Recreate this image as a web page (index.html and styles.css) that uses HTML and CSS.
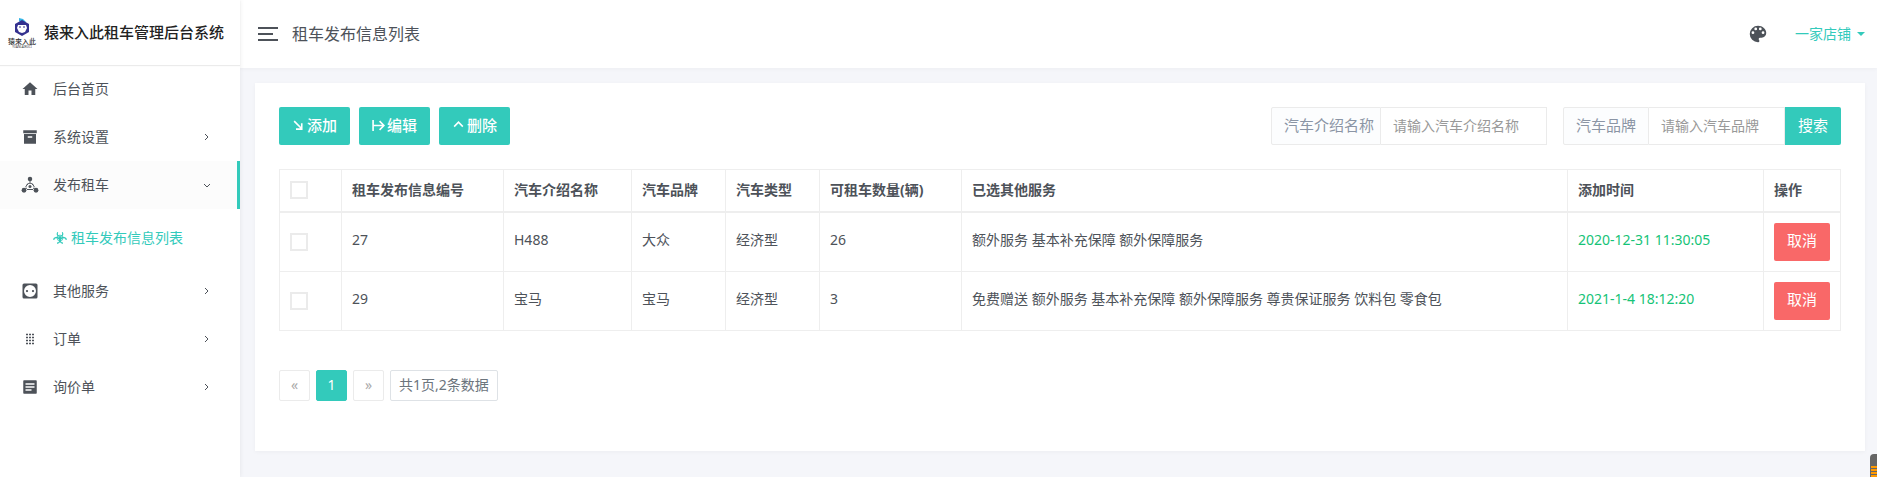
FILE: index.html
```html
<!DOCTYPE html>
<html lang="zh-CN">
<head>
<meta charset="utf-8">
<title>租车发布信息列表</title>
<link rel="stylesheet" href="styles.css">
</head>
<body>
<div class="layout">
  <aside class="sidebar">
    <a class="brand" href="#">
      <svg class="brand-mark" viewBox="0 0 32 32" aria-hidden="true">
        <path d="M13 1l4 1 3 3-4 1-3-2z" fill="#35b5e6"/>
        <path d="M16 3l7 4v8l-7 4-7-4V7z" fill="#34318f"/>
        <path d="M12 8h8l1 3-2 4-3 1-3-1-2-4z" fill="#fff"/>
        <path d="M13 10h2M17 10h2" stroke="#34318f"/>
        <text x="16" y="27" class="mark-name">猿来入此</text>
        <text x="16" y="31" class="mark-sub">YUANLAIRUCI</text>
      </svg>
      <span class="brand-name">猿来入此租车管理后台系统</span>
    </a>
    <nav>
      <ul class="menu">
        <li><a class="menu-link" href="#">
          <svg class="icon" viewBox="0 0 24 24"><path d="M10 20v-6h4v6h5v-8h3L12 3 2 12h3v8z"/></svg>
          <span>后台首页</span></a></li>
        <li><a class="menu-link" href="#">
          <svg class="icon" viewBox="0 0 24 24"><path d="M3 3h18v4H3zM4 8h16v13H4zM9 11v2h6v-2z" fill-rule="evenodd"/></svg>
          <span>系统设置</span>
          <svg class="arrow" viewBox="0 0 12 12"><path d="M4 3l3 3-3 3"/></svg></a></li>
        <li><a class="menu-link active" href="#">
          <svg class="icon" viewBox="0 0 24 24"><circle cx="12" cy="4" r="3"/><circle cx="4" cy="19" r="3.2"/><circle cx="20" cy="19" r="3.2"/><circle cx="12" cy="14" r="2"/><path d="M12 6v3M6 17l2-1M18 17l-2-1M8 12a4.500 4.500 0 018 0M8 18h8M9 10l-3 5M15 10l3 5" fill="none" stroke="currentColor" stroke-width="1.3"/></svg>
          <span>发布租车</span>
          <svg class="arrow" viewBox="0 0 12 12"><path d="M3 5l3 3 3-3"/></svg></a>
          <ul class="submenu">
            <li><a class="submenu-link" href="#">
              <svg class="icon-small" viewBox="0 0 24 24"><g fill="none" stroke="currentColor"><path d="M8 2c-2 4 0 7 4 7s6-3 4-7" stroke-width="2"/><path d="M1 15c1-4 6-5 9-2s2 7-3 8M23 15c-1-4-6-5-9-2s-2 7 3 8" stroke-width="2.400"/><circle cx="12" cy="12" r="5" stroke-width="1.300"/></g><circle cx="12" cy="12" r="2.500"/></svg>
              <span>租车发布信息列表</span></a></li>
          </ul></li>
        <li><a class="menu-link" href="#">
          <svg class="icon" viewBox="0 0 24 24"><path d="M4 2h16q2 0 2 2v16q0 2-2 2H4q-2 0-2-2V4q0-2 2-2zM12 4a8 8 0 100 16 8 8 0 000-16zM8 10.500a1.500 1.500 0 110 3 1.500 1.500 0 010-3zM16 10.500a1.500 1.500 0 110 3 1.500 1.500 0 010-3z" fill-rule="evenodd"/></svg>
          <span>其他服务</span>
          <svg class="arrow" viewBox="0 0 12 12"><path d="M4 3l3 3-3 3"/></svg></a></li>
        <li><a class="menu-link" href="#">
          <svg class="icon" viewBox="0 0 18 18"><path d="M5 4.500h8M5 7.500h8M5 10.500h8M5 13.500h8" fill="none" stroke="currentColor" stroke-width="1.300" stroke-dasharray="2 1"/></svg>
          <span>订单</span>
          <svg class="arrow" viewBox="0 0 12 12"><path d="M4 3l3 3-3 3"/></svg></a></li>
        <li><a class="menu-link" href="#">
          <svg class="icon" viewBox="0 0 24 24"><path d="M4 3h16q1 0 1 1v16q0 1-1 1H4q-1 0-1-1V4q0-1 1-1zM6 7v2h12V7zM6 11v2h12v-2zM6 15v2h8v-2z" fill-rule="evenodd"/></svg>
          <span>询价单</span>
          <svg class="arrow" viewBox="0 0 12 12"><path d="M4 3l3 3-3 3"/></svg></a></li>
      </ul>
    </nav>
  </aside>

  <div class="page">
    <header class="topbar">
      <button class="toggler" type="button" aria-label="菜单"><i></i><i class="short"></i><i></i></button>
      <h1 class="title">租车发布信息列表</h1>
      <button class="skin" type="button" aria-label="主题">
        <svg viewBox="0 0 24 24"><path d="M17.500 12a1.500 1.500 0 010-3 1.500 1.500 0 010 3m-3-4a1.500 1.500 0 010-3 1.500 1.500 0 010 3m-5 0a1.500 1.500 0 010-3 1.500 1.500 0 010 3m-3 4a1.500 1.500 0 010-3 1.500 1.500 0 010 3M12 3a9 9 0 000 18 1.500 1.500 0 001.500-1.500c0-.39-.15-.74-.39-1-.23-.27-.38-.62-.38-1a1.500 1.500 0 011.500-1.500H16a5 5 0 005-5c0-4.420-4.030-8-9-8z" fill-rule="evenodd"/></svg>
      </button>
      <button class="account" type="button"><span>一家店铺</span><i class="caret"></i></button>
    </header>

    <main class="content">
      <section class="card">
        <div class="toolbar">
          <div class="actions">
            <button class="btn" type="button"><svg viewBox="0 0 12 12"><path d="M2 2l7 7M9 4v5.300H3.700"/></svg>添加</button>
            <button class="btn" type="button"><svg viewBox="0 0 12 12"><path d="M1 1v10M1 6h10M7 2l4 4-4 4"/></svg>编辑</button>
            <button class="btn" type="button"><svg viewBox="0 0 12 12"><path d="M2 7l4-4 4 4"/></svg>删除</button>
          </div>
          <form class="search">
            <div class="field">
              <label for="intro">汽车介绍名称</label>
              <input id="intro" class="wide" type="text" placeholder="请输入汽车介绍名称">
            </div>
            <div class="field">
              <label for="make">汽车品牌</label>
              <input id="make" class="narrow" type="text" placeholder="请输入汽车品牌">
              <button class="btn submit" type="button">搜索</button>
            </div>
          </form>
        </div>

        <table class="list">
          <colgroup><col class="c-check"><col class="c-id"><col class="c-name"><col class="c-kind"><col class="c-kind"><col class="c-count"><col><col class="c-time"><col class="c-act"></colgroup>
          <thead>
            <tr>
              <th class="pick"><input type="checkbox" aria-label="全选"></th>
              <th>租车发布信息编号</th><th>汽车介绍名称</th><th>汽车品牌</th><th>汽车类型</th><th>可租车数量(辆)</th><th>已选其他服务</th><th>添加时间</th><th>操作</th>
            </tr>
          </thead>
          <tbody>
            <tr>
              <td class="pick"><input type="checkbox" aria-label="选择27"></td>
              <td>27</td><td>H488</td><td>大众</td><td>经济型</td><td>26</td><td>额外服务 基本补充保障 额外保障服务</td><td class="time">2020-12-31 11:30:05</td>
              <td class="act"><button class="btn danger" type="button">取消</button></td>
            </tr>
            <tr>
              <td class="pick"><input type="checkbox" aria-label="选择29"></td>
              <td>29</td><td>宝马</td><td>宝马</td><td>经济型</td><td>3</td><td>免费赠送 额外服务 基本补充保障 额外保障服务 尊贵保证服务 饮料包 零食包</td><td class="time">2021-1-4 18:12:20</td>
              <td class="act"><button class="btn danger" type="button">取消</button></td>
            </tr>
          </tbody>
        </table>

        <ul class="pager">
          <li class="off">«</li>
          <li><a class="current" href="#">1</a></li>
          <li class="off">»</li>
          <li class="total">共1页,2条数据</li>
        </ul>
      </section>
    </main>
  </div>
</div>
<div class="meter" aria-hidden="true"></div>
</body>
</html>
```
FILE: styles.css
```css
* { box-sizing: border-box; }
body {
  margin: 0;
  background: #f5f6fa;
  color: #4d5259;
  font: 14px/21px "Noto Sans", "Noto Sans CJK SC", sans-serif;
}
a { color: inherit; text-decoration: none; }
ul { list-style: none; margin: 0; padding: 0; }
button, input { font: inherit; color: inherit; }
button { border: 0; background: none; padding: 0; }

.layout { display: flex; min-height: 100vh; }

/* Sidebar */
.sidebar {
  flex: 0 0 240px;
  background: #fff;
  box-shadow: 0 0 5px rgba(0, 0, 0, .08);
  z-index: 1;
}
.brand {
  display: flex;
  align-items: center;
  gap: 6px;
  height: 65px;
  padding-left: 6px;
  box-shadow: 0 1px 1px rgba(0, 0, 0, .08);
}
.brand-mark { width: 32px; height: 32px; }
.mark-name { font-size: 7px; font-weight: 500; text-anchor: middle; fill: #333; }
.mark-sub { font-size: 3px; text-anchor: middle; fill: #333; }
.brand-name { font-size: 15px; font-weight: 500; color: #222; white-space: nowrap; }
.menu-link {
  display: flex;
  align-items: center;
  height: 48px;
  padding: 0 24px 0 21px;
  border-right: 3px solid transparent;
}
.menu-link span, .submenu-link span, .account span { padding-bottom: 2px; }
.menu-link.active { background: #fcfcfc; border-right-color: #33cabb; }
.icon { width: 18px; height: 18px; margin-right: 14px; fill: currentColor; }
.arrow {
  width: 12px;
  height: 12px;
  margin-left: auto;
  fill: none;
  stroke: currentColor;
}
.submenu { padding: 5px 0; }
.submenu-link {
  display: flex;
  align-items: center;
  gap: 4px;
  height: 48px;
  padding-left: 53px;
  color: #33cabb;
}
.icon-small { width: 14px; height: 14px; fill: currentColor; }

/* Top bar */
.page { flex: 1; min-width: 0; }
.topbar {
  display: flex;
  align-items: center;
  height: 68px;
  padding: 0 12px 0 18px;
  background: #fff;
  box-shadow: 0 1px 4px rgba(0, 0, 0, .04);
}
.toggler { display: flex; flex-direction: column; gap: 4px; width: 20px; }
.toggler i { height: 2px; background: #4d5259; }
.toggler .short { width: 15px; }
.title { flex: 1; margin: 0 0 0 14px; font-size: 16px; font-weight: 400; }
.skin { width: 22px; height: 22px; margin-right: 26px; }
.skin svg { display: block; fill: #4d5259; }
.account { display: flex; align-items: center; gap: 6px; color: #33cabb; }
.caret { border: 4px solid transparent; border-top-color: #33cabb; border-bottom: 0; }

/* Card */
.content { padding: 15px 12px 24px 15px; }
.card {
  padding: 24px 24px 50px;
  background: #fff;
  box-shadow: 0 1px 4px rgba(0, 0, 0, .04);
}
.toolbar { display: flex; justify-content: space-between; margin-bottom: 24px; }
.actions { display: flex; gap: 9px; }
.btn {
  display: inline-flex;
  align-items: center;
  justify-content: center;
  height: 38px;
  padding: 0 13px 2px;
  border-radius: 2px;
  background: #33cabb;
  color: #fff;
  font-size: 15px;
  white-space: nowrap;
}
.actions .btn { width: 71px; font-weight: 500; }
.btn svg { width: 13px; height: 13px; margin-right: 2px; fill: none; stroke: currentColor; stroke-width: 1.500; }
.submit { border-radius: 0 2px 2px 0; }
.danger { background: #f96868; }
.search { display: flex; gap: 16px; }
.field { display: flex; }
.field label {
  padding: 7px 6px 8px 12px;
  border: 1px solid #ebebeb;
  border-radius: 2px 0 0 2px;
  background: #fcfdfe;
  color: #8b95a5;
  font-size: 15px;
  white-space: nowrap;
}
.field label[for="make"] { padding-right: 12px; }
.field input {
  height: 38px;
  padding: 0 12px 2px;
  border: 1px solid #ebebeb;
  border-left: 0;
  border-radius: 0;
  outline: 0;
}
.field input::placeholder { color: #999; }
.wide { width: 166px; }
.narrow { width: 136px; }

/* Table */
.list { width: 100%; border-collapse: collapse; table-layout: fixed; }
.c-check { width: 62px; }
.c-id { width: 162px; }
.c-name { width: 128px; }
.c-kind { width: 94px; }
.c-count { width: 142px; }
.c-time { width: 196px; }
.c-act { width: 77px; }
.list th, .list td { border: 1px solid #eee; text-align: left; vertical-align: middle; }
.list th { height: 42px; padding: 8px 10px 10px; border-bottom: 2px solid #eee; font-weight: 700; }
.list td { height: 59px; padding: 8px 10px 12px; }
.list .pick, .list .act { padding: 10px; }
.list .time { color: #15c377; }
.list input {
  display: block;
  appearance: none;
  width: 18px;
  height: 18px;
  margin: 0;
  border: 2px solid #ebebeb;
}
.act .btn { display: flex; width: 56px; }

/* Pager */
.pager { display: flex; gap: 6px; margin-top: 39px; }
.pager li {
  min-width: 31px;
  height: 31px;
  border: 1px solid #ebebeb;
  border-radius: 2px;
  line-height: 28px;
  text-align: center;
}
.pager li:has(.current) { border-color: #33cabb; background: #33cabb; color: #fff; }
.pager .current { display: block; }
.pager .off { color: #aaa; }
.pager .total { padding: 0 8px; border-color: #dee2e6; color: #6c757d; }

/* Floating usage meter */
.meter {
  position: fixed;
  right: 0;
  bottom: 0;
  width: 7px;
  height: 23px;
  border: solid #666;
  border-width: 12px 0 0 1px;
  border-radius: 4px 0 0 0;
  background: repeating-linear-gradient(#f90 0 2px, #666 2px 3px);
}
```
